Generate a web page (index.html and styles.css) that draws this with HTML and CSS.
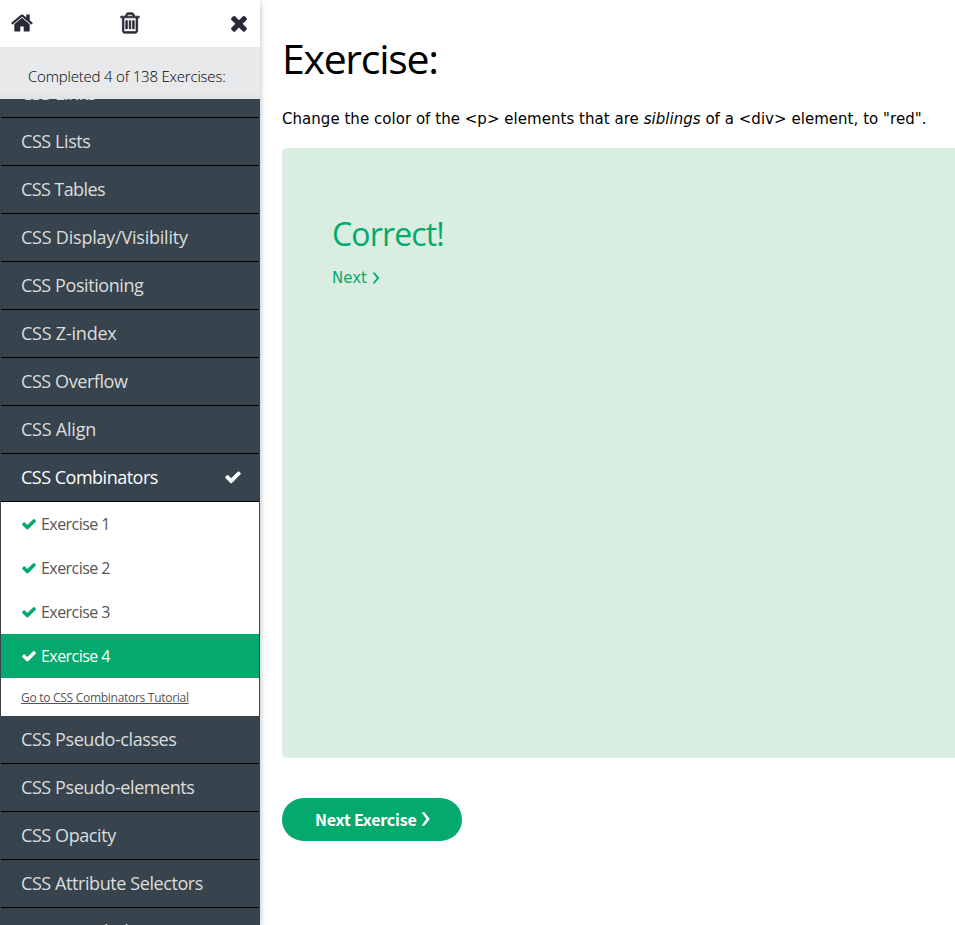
FILE: index.html
```html
<!DOCTYPE html>
<html lang="en">
<head>
<meta charset="utf-8">
<title>CSS Exercises</title>
<link rel="stylesheet" href="styles.css">
</head>
<body>
<svg class="defs" aria-hidden="true">
  <symbol id="check" viewBox="0 0 1792 1792"><path d="M1671 566q0 40-28 68l-724 724-136 136q-28 28-68 28t-68-28l-136-136-362-362q-28-28-28-68t28-68l136-136q28-28 68-28t68 28l294 295 656-657q28-28 68-28t68 28l136 136q28 28 28 68z"/></symbol>
</svg>
<div class="page">
  <nav class="sidebar">
    <div class="toolbar">
      <svg viewBox="0 0 1792 1792"><path d="M1472 992v480q0 26-19 45t-45 19h-384v-384h-256v384h-384q-26 0-45-19t-19-45v-480q0-1 .5-3t.5-3l575-474 575 474q1 2 1 6zm223-69l-62 74q-8 9-21 11h-3q-13 0-21-7l-692-577-692 577q-12 8-24 7-13-2-21-11l-62-74q-8-10-7-23.5t11-21.5l719-599q32-26 76-26t76 26l244 204v-195q0-14 9-23t23-9h192q14 0 23 9t9 23v408l219 182q10 8 11 21.5t-7 23.5z"/></svg>
      <svg class="trash" viewBox="0 0 1792 1792"><path d="M704 736v576q0 14-9 23t-23 9h-64q-14 0-23-9t-9-23v-576q0-14 9-23t23-9h64q14 0 23 9t9 23zm256 0v576q0 14-9 23t-23 9h-64q-14 0-23-9t-9-23v-576q0-14 9-23t23-9h64q14 0 23 9t9 23zm256 0v576q0 14-9 23t-23 9h-64q-14 0-23-9t-9-23v-576q0-14 9-23t23-9h64q14 0 23 9t9 23zm128 724v-948h-896v948q0 22 7 40.500t14.500 27 10.500 8.500h832q3 0 10.500-8.500t14.500-27 7-40.500zm-672-1076h448l-48-117q-7-9-17-11h-317q-10 2-17 11zm928 32v64q0 14-9 23t-23 9h-96v948q0 83-47 143.500t-113 60.500h-832q-66 0-113-58.500t-47-141.500v-952h-96q-14 0-23-9t-9-23v-64q0-14 9-23t23-9h309l70-167q15-37 54-63t79-26h320q40 0 79 26t54 63l70 167h309q14 0 23 9t9 23z"/></svg>
      <svg viewBox="0 0 1792 1792"><path d="M1490 1322q0 40-28 68l-136 136q-28 28-68 28t-68-28l-294-294-294 294q-28 28-68 28t-68-28l-136-136q-28-28-28-68t28-68l294-294-294-294q-28-28-28-68t28-68l136-136q28-28 68-28t68 28l294 294 294-294q28-28 68-28t68 28l136 136q28 28 28 68t-28 68l-294 294 294 294q28 28 28 68z"/></svg>
    </div>
    <div class="progress"><span>Completed 4 of 138 Exercises:</span></div>
    <div class="topics">
      <a class="topic">CSS Links</a>
      <a class="topic">CSS Lists</a>
      <a class="topic tight">CSS Tables</a>
      <a class="topic loose">CSS Display/Visibility</a>
      <a class="topic">CSS Positioning</a>
      <a class="topic loose">CSS Z-index</a>
      <a class="topic">CSS Overflow</a>
      <a class="topic loose">CSS Align</a>
      <a class="topic open">CSS Combinators<svg><use href="#check"/></svg></a>
      <div class="exercises">
        <a class="exercise"><svg><use href="#check"/></svg>Exercise 1</a>
        <a class="exercise"><svg><use href="#check"/></svg>Exercise 2</a>
        <a class="exercise"><svg><use href="#check"/></svg>Exercise 3</a>
        <a class="exercise current"><svg><use href="#check"/></svg>Exercise 4</a>
        <a class="tutorial"><span>Go to CSS Combinators Tutorial</span></a>
      </div>
      <a class="topic">CSS Pseudo-classes</a>
      <a class="topic">CSS Pseudo-elements</a>
      <a class="topic">CSS Opacity</a>
      <a class="topic">CSS Attribute Selectors</a>
      <a class="topic">CSS Rounded Corners</a>
    </div>
  </nav>
  <main class="main">
    <h1>Exercise:</h1>
    <p class="task">Change the color of the &lt;p&gt; elements that are <em>siblings</em> of a &lt;div&gt; element, to "red".</p>
    <section class="result">
      <h2>Correct!</h2>
      <a class="next">Next <svg viewBox="0 0 8 12"><path d="M.5.5H2.700L7.300 6 2.700 11.500H.5L4.800 6z"/></svg></a>
    </section>
    <a class="button">Next Exercise <svg viewBox="0 0 8 12"><path d="M.5 0H3L7.800 6 3 12H.5L4.800 6z"/></svg></a>
  </main>
</div>
</body>
</html>
```
FILE: styles.css
```css
* { box-sizing: border-box; }
body { margin: 0; background: #fff; color: #000; font-family: "DejaVu Sans", sans-serif; }
.defs { display: none; }
.page { display: flex; height: 925px; overflow: hidden; }
svg { fill: currentColor; flex: none; }

.sidebar {
  display: flex; flex-direction: column; flex: none; width: 260px; height: 925px;
  font-family: "Open Sans", sans-serif; background: #38444d;
  box-shadow: 0 2px 5px rgba(0,0,0,.16), 0 2px 10px rgba(0,0,0,.12);
}
.toolbar {
  display: flex; justify-content: space-between; flex: none; height: 47px;
  padding: 11px 9px 0 10px; background: #fff; color: #282a35;
}
.toolbar svg { width: 24px; height: 24px; }
.toolbar .trash { margin-right: 2px; stroke: currentColor; stroke-width: 50; }
.progress {
  flex: none; height: 52px; padding-left: 28px;
  background: linear-gradient(to bottom, #e7e9eb 46px, #dfe1e3 52px);
  font-size: 15px; font-weight: 300; line-height: 58px; letter-spacing: -.2px; white-space: nowrap;
}
.topics { flex: 1; min-height: 0; overflow: hidden; display: flex; flex-direction: column; padding: 0 1px; }
.topic {
  display: flex; justify-content: space-between; align-items: center; flex: none; height: 48px;
  padding: 0 17px 2px 20px; border-bottom: 1px solid #000; color: #ddd;
  font-size: 18px; letter-spacing: -.42px; white-space: nowrap;
}
.topic:first-child { margin-top: -29px; }
.topic.tight { letter-spacing: -.6px; }
.topic.loose { letter-spacing: -.22px; }
.topic.open { color: #fff; letter-spacing: -.5px; }
.topic svg { width: 18px; height: 18px; }
.exercises { flex: none; background: #fff; color: #555; }
.exercise {
  display: flex; align-items: center; gap: 4px; height: 44px; padding-left: 20px;
  font-size: 16px; letter-spacing: -.55px;
}
.exercise svg { width: 16px; height: 16px; color: #04aa6d; }
.exercise.current { background: #04aa6d; color: #fff; }
.exercise.current svg { color: #fff; }
.tutorial { display: flex; align-items: center; height: 38px; padding-left: 20px; font-size: 12px; text-decoration: underline; letter-spacing: -.28px; }

.main { flex: 1; min-width: 0; padding: 28px 0 0 22px; }
h1, h2 { margin: 0; font-family: "Open Sans", sans-serif; font-weight: 400; }
h1 { font-size: 41px; line-height: 60px; letter-spacing: -1.3px; }
.task { margin: 20px 0 17px; font-size: 15px; line-height: 23px; letter-spacing: .035px; white-space: nowrap; }
.result { height: 610px; padding: 62px 50px; border-radius: 5px 0 0 5px; background: #d9eee1; color: #04aa6d; }
h2 { font-size: 32px; line-height: 48px; letter-spacing: -.85px; }
.next { display: flex; align-items: center; gap: 5px; margin-top: 9px; font-size: 15px; line-height: 23px; }
.next svg { width: 8px; height: 12px; margin-top: -2px; }
.button {
  display: flex; align-items: center; gap: 4px; width: 180px; height: 43px; padding: 0 0 1px 33px;
  margin-top: 40px; border-radius: 25px; background: #04aa6d; color: #fff;
  font-family: "Noto Sans CJK SC", sans-serif; font-size: 16px; font-weight: 700; letter-spacing: -.2px; white-space: nowrap;
}
.button svg { width: 9px; height: 14px; }
```
